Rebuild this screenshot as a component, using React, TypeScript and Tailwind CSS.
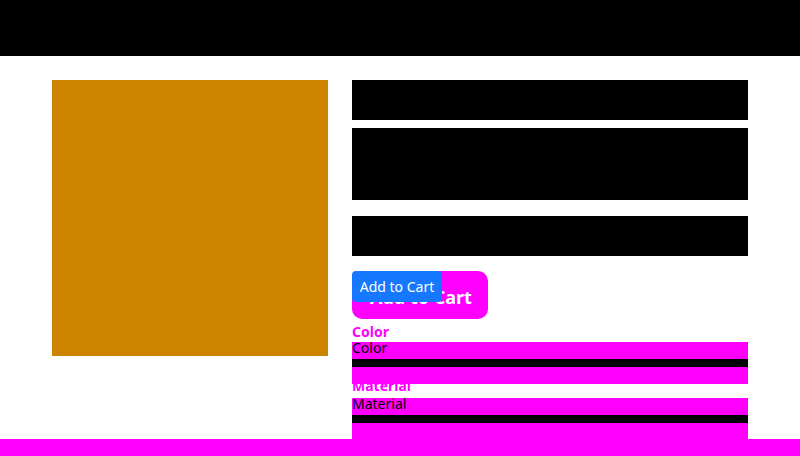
export default function App() {
  return (
    <div className="min-h-[456px] bg-white font-['Noto_Sans',sans-serif] overflow-hidden">
      <header className="h-14 bg-black" />
      <main className="flex gap-6 px-[52px] pt-6">
        <div className="w-[276px] h-[276px] shrink-0 bg-[#cc8400]" />
        <div className="flex-1 flex flex-col">
          <div className="h-10 bg-black" />
          <div className="h-[72px] mt-2 bg-black" />
          <div className="h-10 mt-4 bg-black" />

          <div className="relative mt-[15px] w-[136px] h-12">
            <button className="w-full h-full rounded-[10px] bg-[#ff00ff] text-white text-lg font-bold pl-[18px] text-left pt-1">
              Add to Cart
            </button>
            <button className="absolute left-0 top-0 w-[90px] h-[31px] rounded-[4px] bg-[#1677ff] text-white text-sm">
              Add to Cart
            </button>
          </div>

          <div className="mt-[3px] text-sm font-bold leading-5 text-[#ff00ff]">Color</div>
          <div className="h-[42px] flex flex-col bg-[#ff00ff]">
            <span className="h-[17px] text-sm leading-[11px] text-black">Color</span>
            <span className="h-2 bg-black" />
          </div>

          <div className="-mt-[8px] h-5 text-sm font-bold leading-5 text-[#ff00ff] relative">Material</div>
          <div className="mt-[2px] h-[41px] flex flex-col bg-[#ff00ff]">
            <span className="h-[17px] text-sm leading-[11px] text-black">Material</span>
            <span className="h-2 bg-black" />
          </div>
        </div>
      </main>
      <footer className="h-[17px] bg-[#ff00ff]" />
    </div>
  );
}
